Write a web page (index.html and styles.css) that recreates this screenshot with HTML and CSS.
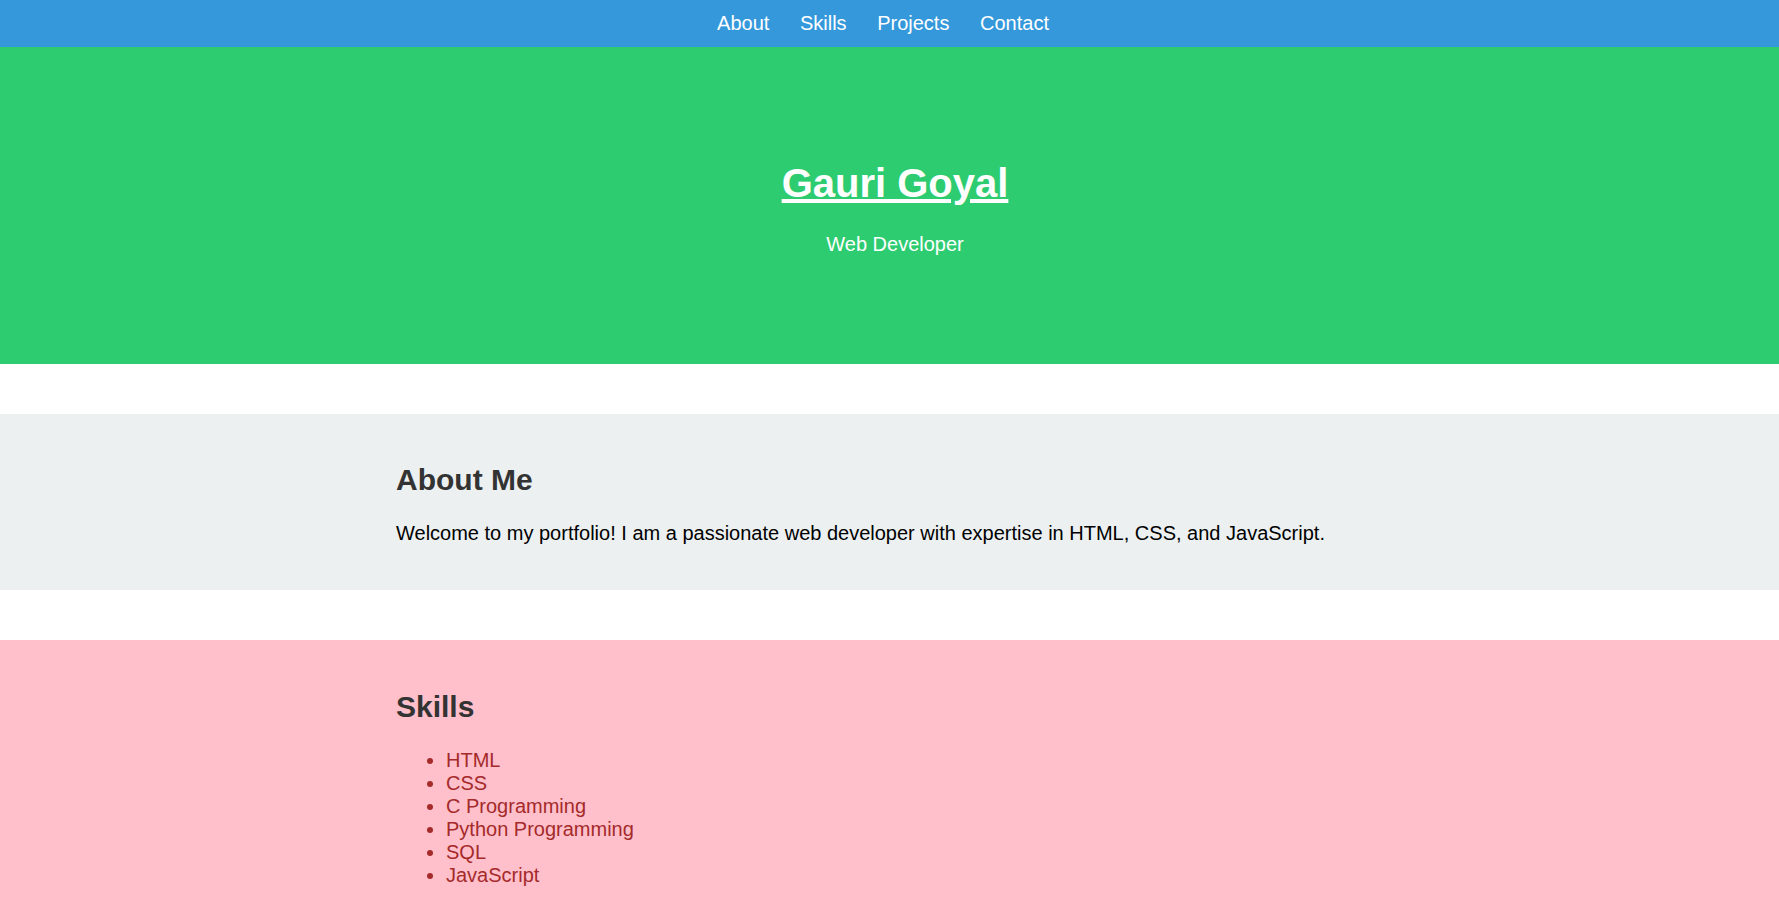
FILE: index.html
```html
<!DOCTYPE html>
<html lang="en">
<head>
<meta charset="utf-8">
<title>Gauri Goyal - Portfolio</title>
<link rel="stylesheet" href="styles.css">
</head>
<body>
<nav class="nav">
  <ul class="nav-list">
    <li><a href="#about">About</a></li>
    <li><a href="#skills">Skills</a></li>
    <li><a href="#projects">Projects</a></li>
    <li><a href="#contact">Contact</a></li>
  </ul>
</nav>
<header class="hero">
  <h1 class="hero-title"><a href="#">Gauri Goyal</a></h1>
  <p class="hero-sub">Web Developer</p>
</header>
<section class="section about" id="about">
  <div class="container">
    <h2 class="section-title">About Me</h2>
    <p class="about-text">Welcome to my portfolio! I am a passionate web developer with expertise in HTML, CSS, and JavaScript.</p>
  </div>
</section>
<section class="section skills" id="skills">
  <div class="container">
    <h2 class="section-title">Skills</h2>
    <ul class="skill-list">
      <li>HTML</li>
      <li>CSS</li>
      <li>C Programming</li>
      <li>Python Programming</li>
      <li>SQL</li>
      <li>JavaScript</li>
    </ul>
  </div>
</section>
</body>
</html>
```
FILE: styles.css
```css
html, body {
  margin: 0;
  padding: 0;
}
body {
  font-family: "Liberation Sans", Arial, sans-serif;
  font-size: 20px;
  line-height: normal;
  color: #000;
  background: #fff;
}
.nav {
  background: #3498db;
  padding: 12px 0;
}
.nav-list {
  list-style: none;
  margin: 0;
  padding: 0 13px 0 0;
  display: flex;
  justify-content: center;
  gap: 30.6px;
}
.nav-list a {
  color: #fff;
  text-decoration: none;
  font-size: 20px;
  line-height: 23px;
  display: block;
}
.hero {
  background: #2ecc71;
  color: #fff;
  text-align: center;
  padding: 86px 0 88px 11px;
}
.hero-title {
  font-size: 40px;
  margin: 27px 0;
  line-height: 46px;
}
.hero-title a {
  color: #fff;
  text-decoration: underline;
}
.hero-sub {
  margin: 20px 0;
  font-size: 20px;
}
.section {
  padding: 24px 0;
  margin: 50px 0;
}
.container {
  width: 987px;
  margin: 0 auto;
}
.about {
  background: #ecf0f1;
}
.about .section-title {
  margin-bottom: 24px;
}
.skills {
  background: #ffc0cb;
  padding-top: 25px;
}
.section-title {
  font-size: 30px;
  line-height: 34.5px;
  color: #333;
  margin: 25px 0;
}
.about-text {
  margin: 20px 0;
  padding-bottom: 1px;
}
.skill-list {
  margin: 21px 0 20px;
  padding-left: 50px;
  color: #a52a2a;
}
```
